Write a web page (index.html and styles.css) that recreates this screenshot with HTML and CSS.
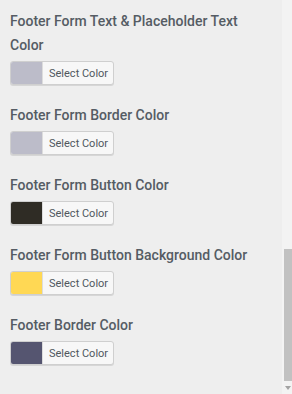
FILE: index.html
```html
<!DOCTYPE html>
<html>
<head>
<meta charset="utf-8">
<link rel="stylesheet" href="styles.css">
</head>
<body>
<div class="frame">
  <div class="panel">
    <div class="field">
      <div class="label">Footer Form Text &amp; Placeholder Text Color</div>
      <button class="picker"><span class="swatch sw-text"></span><span class="picker-text">Select Color</span></button>
    </div>
    <div class="field">
      <div class="label">Footer Form Border Color</div>
      <button class="picker"><span class="swatch sw-border"></span><span class="picker-text">Select Color</span></button>
    </div>
    <div class="field">
      <div class="label">Footer Form Button Color</div>
      <button class="picker"><span class="swatch sw-btn"></span><span class="picker-text">Select Color</span></button>
    </div>
    <div class="field">
      <div class="label">Footer Form Button Background Color</div>
      <button class="picker"><span class="swatch sw-btnbg"></span><span class="picker-text">Select Color</span></button>
    </div>
    <div class="field">
      <div class="label">Footer Border Color</div>
      <button class="picker"><span class="swatch sw-footer"></span><span class="picker-text">Select Color</span></button>
    </div>
  </div>
  <div class="scrollbar">
    <div class="track"><div class="thumb"></div></div>
    <div class="arrow"></div>
  </div>
</div>
</body>
</html>
```

FILE: styles.css
```css
html, body {
  margin: 0;
  padding: 0;
  background: #eeeeee;
}
.frame {
  display: flex;
  width: 292px;
  height: 394px;
  overflow: hidden;
}
.panel {
  flex: 1;
  padding: 9px 0 0 10px;
  font-family: Roboto, "Liberation Sans", sans-serif;
}
.field {
  margin-bottom: 18px;
}
.label {
  font-size: 14px;
  font-weight: 500;
  line-height: 24px;
  color: #555c64;
  width: 250px;
}
.picker {
  display: flex;
  align-items: stretch;
  margin-top: 4px;
  padding: 0;
  width: 104px;
  height: 24px;
  border: 1px solid #cfcfcf;
  border-radius: 3px;
  background: #f7f7f7;
  box-shadow: 0 1px 0 #d6d6d6;
  overflow: hidden;
  font-family: Roboto, "Liberation Sans", sans-serif;
}
.swatch {
  width: 31px;
  flex: none;
}
.picker-text {
  flex: 1;
  display: flex;
  align-items: center;
  padding-left: 6px;
  font-size: 11px;
  color: #50575e;
  border-left: 1px solid #dcdcdc;
}
.sw-text { background: #bcbcc9; }
.sw-border { background: #bcbcc9; }
.sw-btn { background: #2f2c25; }
.sw-btnbg { background: #ffd854; }
.sw-footer { background: #555570; }
.scrollbar {
  width: 10px;
  flex: none;
  background: #f3f3f3;
  display: flex;
  flex-direction: column;
}
.track {
  flex: 1;
  display: flex;
  flex-direction: column;
  justify-content: flex-end;
  padding: 0 0 0 2px;
}
.thumb {
  height: 132px;
  background: #c1c1c1;
}
.arrow {
  height: 13px;
  display: flex;
  justify-content: center;
  align-items: center;
}
.arrow::before {
  content: "";
  margin-left: 2px;
  border-left: 3px solid transparent;
  border-right: 3px solid transparent;
  border-top: 4px solid #a3a3a3;
}
```
